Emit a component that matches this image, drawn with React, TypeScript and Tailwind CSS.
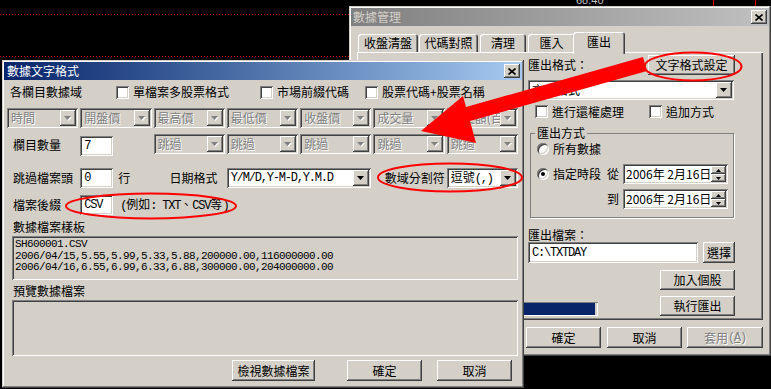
import React from 'react';

const raised = 'shadow-[inset_-1px_-1px_0_#404040,inset_1px_1px_0_#ffffff,inset_-2px_-2px_0_#808080]';
const sunken = 'shadow-[inset_1px_1px_0_#808080,inset_-1px_-1px_0_#ffffff,inset_2px_2px_0_#404040,inset_-2px_-2px_0_#d4d0c8]';
const frame = 'shadow-[inset_-1px_-1px_0_#404040,inset_1px_1px_0_#d4d0c8,inset_-2px_-2px_0_#808080,inset_2px_2px_0_#ffffff]';
const mono = "[font-family:'Liberation_Mono',monospace] text-[12px] tracking-[-1.2px]";
const monoSmall = "[font-family:'Liberation_Mono',monospace] text-[11px] tracking-[-0.6px]";
const grayText = 'text-[#808080] [text-shadow:1px_1px_0_#ffffff]';

function Arrow({ disabled }: { disabled?: boolean }) {
    return (
        <svg width="8" height="5" viewBox="0 0 8 5">
            {disabled && <path d="M1 1h7L4.5 5z" fill="#ffffff"/>}
            <path d="M0 0h7L3.5 4z" fill={disabled ? '#808080' : '#000000'}/>
        </svg>
    );
}

function Combo({ text, disabled, className = '', textClass = '' }: { text: React.ReactNode; disabled?: boolean; className?: string; textClass?: string }) {
    return (
        <div className={`${sunken} ${disabled ? 'bg-[#d4d0c8]' : 'bg-white'} flex h-[20px] items-center p-[2px] ${className}`}>
            <span className={`flex-1 overflow-hidden whitespace-nowrap pl-[2px] ${disabled ? grayText : ''} ${textClass}`}>{text}</span>
            <span className={`${raised} flex h-[16px] w-[16px] shrink-0 items-center justify-center bg-[#d4d0c8]`}>
                <Arrow disabled={disabled}/>
            </span>
        </div>
    );
}

function Check() {
    return <span className={`${sunken} inline-block h-[13px] w-[13px] shrink-0 bg-white`}/>;
}

function Radio({ on }: { on?: boolean }) {
    return (
        <span className="flex h-[12px] w-[12px] shrink-0 items-center justify-center rounded-full bg-white shadow-[inset_1px_1px_0_#808080,inset_-1px_-1px_0_#ffffff,inset_2px_2px_0_#404040,inset_-2px_-2px_0_#d4d0c8]">
            {on && <span className="h-[4px] w-[4px] rounded-full bg-black"/>}
        </span>
    );
}

function Btn({ children, className = '', disabled }: { children: React.ReactNode; className?: string; disabled?: boolean }) {
    return (
        <button type="button" className={`${raised} flex items-center justify-center bg-[#d4d0c8] ${disabled ? grayText : ''} ${className}`}>
            {children}
        </button>
    );
}

function Field({ children, className = '' }: { children?: React.ReactNode; className?: string }) {
    return <div className={`${sunken} flex items-center bg-white pl-[4px] ${className}`}>{children}</div>;
}

function CloseBtn() {
    return (
        <span className={`${raised} flex h-[14px] w-[16px] items-center justify-center bg-[#d4d0c8]`}>
            <svg width="8" height="7" viewBox="0 0 8 7">
                <path d="M0.5 0.5l7 6M7.5 0.5l-7 6" stroke="#000000" strokeWidth="1.6"/>
            </svg>
        </span>
    );
}

function DateBox({ text }: { text: string }) {
    return (
        <div className={`${sunken} flex h-[20px] w-[105px] items-center bg-white p-[2px]`}>
            <span className="flex-1 pl-[1px] whitespace-nowrap">{text}</span>
            <span className="flex h-[16px] w-[16px] flex-col">
                <span className={`${raised} flex h-[8px] items-center justify-center bg-[#d4d0c8]`}>
                    <svg width="5" height="3" viewBox="0 0 5 3"><path d="M2.5 0L5 3H0z" fill="#000"/></svg>
                </span>
                <span className={`${raised} flex h-[8px] items-center justify-center bg-[#d4d0c8]`}>
                    <svg width="5" height="3" viewBox="0 0 5 3"><path d="M0 0h5L2.5 3z" fill="#000"/></svg>
                </span>
            </span>
        </div>
    );
}

function ManageWindow() {
    const tab = 'shadow-[inset_1px_1px_0_#ffffff,inset_-1px_0_0_#404040,inset_-2px_0_0_#808080] flex items-center justify-center rounded-t-[3px] bg-[#d4d0c8]';
    return (
        <div className={`${frame} absolute left-[349px] top-[6px] flex h-[350px] w-[422px] flex-col bg-[#d4d0c8] p-[2px]`}>
            <div className="flex h-[18px] items-center justify-between bg-gradient-to-r from-[#808080] to-[#c0c0c0] px-[2px]">
                <span className="text-[#d4d0c8]">數據管理</span>
                <CloseBtn/>
            </div>

            <div className="flex flex-col px-[6px]">
                <div className="mt-[6px] flex h-[20px] items-end pl-[1px]">
                    <div className={`${tab} h-[18px] w-[60px]`}>收盤清盤</div>
                    <div className={`${tab} ml-[1px] h-[18px] w-[59px]`}>代碼對照</div>
                    <div className={`${tab} ml-[2px] h-[18px] w-[46px]`}>清理</div>
                    <div className={`${tab} ml-[2px] h-[18px] w-[47px]`}>匯入</div>
                    <div className={`${tab} relative z-10 -mb-[2px] -ml-[2px] h-[22px] w-[52px] pb-[2px]`}>匯出</div>
                </div>

                <div className="flex h-[268px] bg-[#d4d0c8] shadow-[inset_1px_1px_0_#ffffff,inset_-1px_-1px_0_#404040,inset_-2px_-2px_0_#808080]">
                    <div className="ml-[171px] flex w-[207px] flex-col pt-[3px]">
                        <div className="flex h-[20px] items-center justify-between">
                            <span>匯出格式：</span>
                            <Btn className="h-[20px] w-[87px]">文字格式設定</Btn>
                        </div>
                        <Combo text="文字格式" className="mt-[5px] w-[206px]"/>
                        <div className="mt-[5px] flex h-[13px] items-center pl-[7px]">
                            <div className="flex w-[114px] items-center gap-[4px]"><Check/><span>進行還權處理</span></div>
                            <div className="flex items-center gap-[4px]"><Check/><span>追加方式</span></div>
                        </div>

                        <fieldset className="mt-[8px] ml-[2px] w-[204px] border border-[#808080] pb-[8px] shadow-[1px_1px_0_#ffffff]">
                            <legend className="ml-[4px] px-[2px] leading-[14px]">匯出方式</legend>
                            <div className="mt-[2px] flex h-[14px] items-center gap-[4px] pl-[6px]">
                                <Radio/><span>所有數據</span>
                            </div>
                            <div className="mt-[8px] flex h-[20px] items-center pl-[6px]">
                                <Radio on/>
                                <span className="ml-[4px]">指定時段</span>
                                <span className="ml-[6px]">從</span>
                                <span className="ml-[4px]"><DateBox text="2006年 2月16日"/></span>
                            </div>
                            <div className="mt-[5px] flex h-[20px] items-center pl-[76px]">
                                <span>到</span>
                                <span className="ml-[4px]"><DateBox text="2006年 2月16日"/></span>
                            </div>
                        </fieldset>

                        <div className="mt-[10px] h-[14px]">匯出檔案：</div>
                        <div className="flex h-[21px] justify-between">
                            <Field className={`w-[170px] ${mono}`}>C:\TXTDAY</Field>
                            <Btn className="h-[21px] w-[32px]">選擇</Btn>
                        </div>
                        <Btn className="mt-[7px] h-[20px] w-[75px] self-end">加入個股</Btn>
                        <div className="mt-[6px] flex h-[20px] items-end justify-between">
                            <div className="-ml-[8px] h-[14px] w-[78px] p-[1px] shadow-[inset_1px_1px_0_#808080,inset_-1px_-1px_0_#ffffff]">
                                <div className="h-full w-[74px] bg-[#0a246a]"/>
                            </div>
                            <Btn className="h-[20px] w-[75px]">執行匯出</Btn>
                        </div>
                    </div>
                </div>

                <div className="mt-[7px] flex justify-end">
                    <Btn className="h-[21px] w-[75px]">確定</Btn>
                    <Btn className="ml-[6px] h-[21px] w-[75px]">取消</Btn>
                    <Btn disabled className="ml-[5px] h-[21px] w-[76px]">套用<span className={mono}>(<u>A</u>)</span></Btn>
                </div>
            </div>
        </div>
    );
}

function FormatWindow() {
    return (
        <div className={`${frame} absolute left-[2px] top-[60px] flex h-[328px] w-[522px] flex-col bg-[#d4d0c8] p-[2px]`}>
            <div className="flex h-[18px] items-center justify-between bg-gradient-to-r from-[#0a246a] to-[#a6caf0] pl-[3px] pr-[2px]">
                <span className="text-white">數據文字格式</span>
                <CloseBtn/>
            </div>

            <div className="flex flex-col pl-[3px]">
                <div className="flex h-[24px] items-center pl-[3px]">
                    <span className="w-[106px]">各欄目數據域</span>
                    <div className="flex w-[144px] items-center gap-[4px]"><Check/><span>單檔案多股票格式</span></div>
                    <div className="flex w-[105px] items-center gap-[4px]"><Check/><span>市場前綴代碼</span></div>
                    <div className="flex items-center gap-[4px]"><Check/><span>股票代碼+股票名稱</span></div>
                </div>

                <div className="mt-[4px] grid w-[511px] grid-cols-7 gap-x-[2px]">
                    {['時間', '開盤價', '最高價', '最低價', '收盤價', '成交量', '成交額(百)'].map((t) => (
                        <Combo key={t} text={t} disabled/>
                    ))}
                </div>

                <div className="mt-[6px] grid h-[22px] w-[511px] grid-cols-7 gap-x-[2px]">
                    <span className="self-center pl-[6px]">欄目數量</span>
                    <Field className={`mt-[2px] h-[20px] w-[33px] ${mono}`}>7</Field>
                    {[0, 1, 2, 3, 4].map((i) => (
                        <Combo key={i} text="跳過" disabled/>
                    ))}
                </div>

                <div className="mt-[12px] grid h-[20px] w-[511px] grid-cols-7 items-center gap-x-[2px]">
                    <span className="pl-[6px] whitespace-nowrap">跳過檔案頭</span>
                    <div className="flex items-center">
                        <Field className={`h-[20px] w-[33px] ${mono}`}>0</Field>
                        <span className="ml-[5px]">行</span>
                    </div>
                    <span className="pl-[16px]">日期格式</span>
                    <Combo text="Y/M/D,Y-M-D,Y.M.D" className="col-span-2" textClass={mono}/>
                    <span className="text-right whitespace-nowrap">數域分割符</span>
                    <Combo text={<>逗號<span className={mono}>(,)</span></>}/>
                </div>

                <div className="mt-[7px] grid h-[20px] w-[511px] grid-cols-7 items-center gap-x-[2px]">
                    <span className="pl-[6px]">檔案後綴</span>
                    <div className="col-span-6 flex items-center">
                        <Field className={`h-[20px] w-[33px] ${mono}`}>CSV</Field>
                        <span className="ml-[7px] whitespace-nowrap">
                            <span className={mono}>(</span>例如<span className={mono}>: TXT</span>、<span className={mono}>CSV</span>等<span className={mono}>)</span>
                        </span>
                    </div>
                </div>

                <div className="mt-[5px] h-[14px] pl-[6px]">數據檔案樣板</div>
                <div className={`${sunken} mt-[2px] ml-[5px] h-[44px] w-[506px] bg-[#d4d0c8] pl-[3px] pt-[3px] ${monoSmall} leading-[11.6px]`}>
                    <div>SH600001.CSV</div>
                    <div>2006/04/15,5.55,5.99,5.33,5.88,200000.00,116000000.00</div>
                    <div>2006/04/16,6.55,6.99,6.33,6.88,300000.00,204000000.00</div>
                </div>

                <div className="mt-[4px] h-[14px] pl-[6px]">預覽數據檔案</div>
                <div className={`${sunken} mt-[2px] ml-[5px] h-[56px] w-[506px] bg-[#d4d0c8]`}/>

                <div className="mt-[4px] flex h-[21px]">
                    <Btn className="ml-[225px] h-[21px] w-[83px]">檢視數據檔案</Btn>
                    <Btn className="ml-[32px] h-[21px] w-[75px]">確定</Btn>
                    <Btn className="ml-[15px] h-[21px] w-[75px]">取消</Btn>
                </div>
            </div>
        </div>
    );
}

function Annotations() {
    return (
        <svg className="pointer-events-none absolute left-0 top-0" width="771" height="389" viewBox="0 0 771 389">
            <ellipse cx="693" cy="66.5" rx="48.5" ry="14" fill="none" stroke="#ff0000" strokeWidth="2"/>
            <ellipse cx="450" cy="177.5" rx="72" ry="14" fill="none" stroke="#ff0000" strokeWidth="2"/>
            <ellipse cx="151" cy="206" rx="85" ry="12.5" fill="none" stroke="#ff0000" strokeWidth="2"/>
            <polygon points="421,131 463,96 466,107 643,57 647,71 470,121 476,143" fill="#ff0000"/>
        </svg>
    );
}

export default function App() {
    const dots = 'h-px w-[350px] bg-[repeating-linear-gradient(90deg,#e00000_0_1px,transparent_1px_3px)]';
    return (
        <div className="relative h-[389px] w-[771px] overflow-hidden bg-black text-[12px] leading-[14px] text-black [font-family:'Noto_Sans_CJK_TC','Noto_Sans',sans-serif]">
            <div className="h-[14px]"/>
            <div className={dots}/>
            <div className="h-[41px]"/>
            <div className={dots}/>
            <span className="absolute left-[576px] -top-[7px] text-[11px] text-[#c0c0c0] [font-family:'Liberation_Sans',sans-serif]">68.40</span>
            <div className="absolute left-[713px] top-0 h-[6px] w-px bg-[#e00000]"/>
            <div className="absolute left-[755px] top-0 h-[6px] w-px bg-[#e00000]"/>

            <ManageWindow/>
            <FormatWindow/>
            <Annotations/>
        </div>
    );
}
